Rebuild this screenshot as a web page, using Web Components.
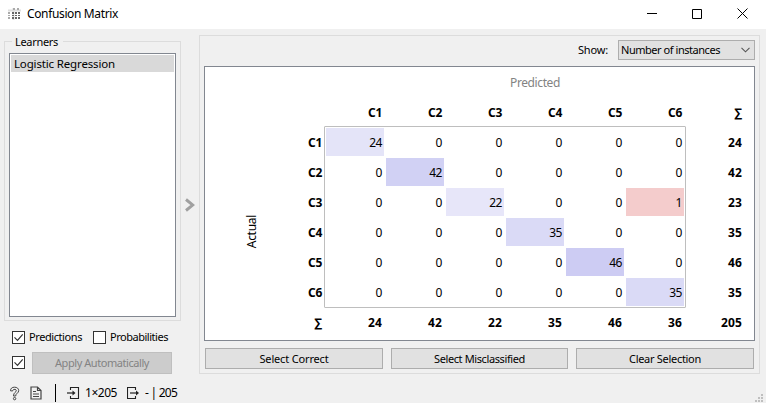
<!DOCTYPE html>
<html lang="en"><head><meta charset="utf-8"><title>Confusion Matrix</title>
<style>html,body{margin:0;width:766px;height:403px;overflow:hidden}</style></head>
<body><cm-window></cm-window>
<script>
const define=(name,html,init)=>{
  const t=document.createElement('template');t.innerHTML=html;
  customElements.define(name,class extends HTMLElement{
    connectedCallback(){
      if(this.shadowRoot)return;
      this.attachShadow({mode:'open'}).append(t.content.cloneNode(true));
      if(init)init(this,this.shadowRoot);
    }
  });
};

/* Text run whose tracking is adjusted to an advance width "w". */
define('ui-text',`<style>:host{display:inline-block;white-space:pre;line-height:16px}span{display:inline-block}</style><span><slot></slot></span>`,(h,r)=>{
  const w=+h.getAttribute('w');if(!w)return;
  const s=r.querySelector('span');
  const n=h.textContent.length;
  s.style.letterSpacing=((w-s.getBoundingClientRect().width)/n).toFixed(3)+'px';
});

define('ui-button',`<style>:host{display:flex;box-sizing:border-box;align-items:center;justify-content:center;background:#e1e1e1;border:1px solid #adadad;color:#000}
:host([disabled]){background:#ccc;border-color:#bfbfbf;color:#838383}</style><slot></slot>`);

define('ui-check',`<style>:host{display:flex;align-items:center;gap:4px;height:16px}svg{display:block;flex:none}path{display:none}:host([checked]) path{display:block}</style>
<svg width="13" height="13"><rect x=".5" y=".5" width="12" height="12" fill="#fff" stroke="#333"/><path d="M2.5 6.3l3 3 5.2-6" fill="none" stroke="#333" stroke-width="1.2"/></svg><slot></slot>`);

define('ui-combo',`<style>:host{display:flex;box-sizing:border-box;align-items:center;justify-content:space-between;width:137px;height:20px;padding:0 4px 0 2px;background:#e1e1e1;border:1px solid #adadad}svg{display:block}</style>
<slot></slot><svg width="9" height="6"><path d="M.5 .8l4 4 4-4" fill="none" stroke="#555" stroke-width="1.1"/></svg>`);

define('cm-titlebar',`<style>:host{display:flex;box-sizing:border-box;height:29px;background:#fff;align-items:center;padding:0 18px 2px 7px;font-size:12px}
.t{flex:1;margin-left:6px}.w{display:flex;gap:35px;align-items:center}svg{display:block}</style>
<svg width="14" height="12"><path d="M1 2.5h13M6.500 0v12" stroke="#ddd" stroke-width="2"/><g fill="#aaa"><rect x="1" y="4" width="2" height="2"/><rect x="1" y="7" width="2" height="1"/><rect x="1" y="9" width="2" height="2"/><rect x="6" y="0" width="2" height="2"/><rect x="10" y="0" width="2" height="2"/></g><g fill="#666"><rect x="5" y="4" width="2" height="2"/><rect x="8" y="4" width="2" height="2"/><rect x="11" y="4" width="2" height="2"/><rect x="5" y="7" width="2" height="1"/><rect x="8" y="7" width="2" height="1"/><rect x="11" y="7" width="2" height="1"/><rect x="5" y="9" width="2" height="2"/><rect x="8" y="9" width="2" height="2"/><rect x="11" y="9" width="2" height="2"/></g></svg>
<ui-text class="t" w="91">Confusion Matrix</ui-text>
<div class="w"><svg width="10" height="11"><path d="M0 5.500h10" stroke="#000"/></svg><svg width="10" height="10"><path d="M.5 .5h9v9h-9z" fill="none" stroke="#000"/></svg><svg width="11" height="11"><path d="M.5 .5l10 10M10.500 .5l-10 10" stroke="#000"/></svg></div>`);

define('cm-learners',`<style>:host{display:block;box-sizing:border-box;width:177px;height:286px;padding-top:6px}
.g{position:relative;height:280px;box-sizing:border-box;border:1px solid #dcdcdc;padding:11px 4px 3px}
.l{position:absolute;left:7px;top:-8px;padding:0 5px 0 3px;background:#f0f0f0}
.list{box-sizing:border-box;width:167px;height:264px;border:1px solid #828790;background:#fff;padding:1px}
.i{height:17px;background:#d9d9d9;padding-left:3px;font-size:11.500px;line-height:17px}</style>
<div class="g"><ui-text class="l" w="43">Learners</ui-text><div class="list"><div class="i"><ui-text w="101">Logistic Regression</ui-text></div></div></div>`);

define('cm-cell',`<style>:host{display:flex;box-sizing:border-box;margin:1px;align-items:center;justify-content:flex-end;padding:1px 2px 0 0;font-size:12px;background:var(--fill,transparent)}
:host([head]){font-weight:700}</style><slot></slot>`);

define('cm-matrix',`<style>:host{display:grid;box-sizing:border-box;width:551px;height:275px;border:1px solid #828790;background:#fff;grid-template-columns:60px repeat(8,60px);grid-template-rows:30px repeat(8,30px)}
.p{grid-area:1/3/2/10;place-self:center;color:#838383;font-size:12px;padding-top:2px}
.a{grid-area:3/1/10/2;place-self:center;writing-mode:vertical-rl;transform:rotate(180deg);font-size:12px;letter-spacing:-.3px;margin-left:34px;line-height:16px}
.f{grid-area:3/3/9/9;margin:-1px;border:1px solid #bebebe;border-radius:1px}</style>
<ui-text class="p" w="50">Predicted</ui-text><div class="a">Actual</div><div class="f"></div>`,(h,r)=>{
  const rows=[['','C1','C2','C3','C4','C5','C6','∑'],['C1',24,0,0,0,0,0,24],['C2',0,42,0,0,0,0,42],['C3',0,0,22,0,0,1,23],['C4',0,0,0,35,0,0,35],['C5',0,0,0,0,46,0,46],['C6',0,0,0,0,0,35,35],['∑',24,42,22,35,46,36,205]];
  const fills={24:'#e4e4f8',42:'#d1d1f4',22:'#e7e6f9',1:'#f4cccc',35:'#dadaf6',46:'#cdccf3'};
  rows.forEach((row,j)=>row.forEach((v,i)=>{
    if(v==='')return;
    const c=document.createElement('cm-cell'),head=!i||!j||i===7||j===7,s=String(v);
    c.style.gridArea=`${j+2}/${i+2}`;
    if(head)c.setAttribute('head','');else if(v)c.style.setProperty('--fill',fills[v]);
    const t=document.createElement('ui-text');t.textContent=s;
    if(s!=='∑')t.setAttribute('w',s[0]==='C'?14:s.length*(head?7:6.4));
    c.append(t);r.append(c);
  }));
});

define('cm-status',`<style>:host{display:flex;align-items:center;height:18px;padding-left:5px;font-size:12px}svg{display:block;flex:none}</style>
<svg width="12" height="15"><g fill="none" stroke="#444" stroke-linejoin="round"><path d="M1.500 4.800C1.500 2.400 3 1.200 5.500 1.200S9.700 2.500 9.700 4.600C9.700 7.300 6.700 7.100 6.700 10H4.500C4.500 6.300 7.300 6.300 7.300 4.700 7.300 2.800 3.800 2.800 3.600 5z"/><circle cx="5.600" cy="12.600" r="1.200"/></g></svg>
<svg width="12" height="14" style="margin-left:9px"><path d="M1 1h6.500L11 4.500V13H1zM7.500 1v3.500H11M3 5.500h3M3 8h6M3 10.500h6" fill="none" stroke="#444" stroke-width="1.200"/></svg>
<svg width="1" height="18" style="margin:0 11px 0 13px"><path d="M.5 0v18" stroke="#000"/></svg>
<svg width="13" height="14"><path d="M3.500 4V1.500h8v11h-8V10" fill="none" stroke="#222" stroke-width="1.100"/><path d="M0 7h7" stroke="#222" stroke-width="1.200"/><path d="M5.500 4.500L8.500 7l-3 2.500z" fill="#222"/></svg>
<ui-text w="32" style="margin-left:5px">1×205</ui-text>
<svg width="13" height="14" style="margin-left:10px"><path d="M8.500 4V1.500h-8v11h8V10" fill="none" stroke="#222" stroke-width="1.100"/><path d="M3 7h7" stroke="#222" stroke-width="1.200"/><path d="M9 4.500L12 7 9 9.500z" fill="#222"/></svg>
<ui-text w="32" style="margin-left:5px">- | 205</ui-text>`);

define('cm-window',`<style>
:host{display:grid;grid-template-rows:29px 374px;width:766px;height:403px;background:#f0f0f0;color:#000;font:11px "Noto Sans","Open Sans",sans-serif}
.body{display:grid;grid-template-columns:177px 18px 567px;grid-template-rows:345px 29px;padding-left:4px}
.left{padding-top:6px}
.checks{display:flex;gap:11px;margin:8px 0 0 8px}
.apply{display:flex;margin:7px 0 0 8px;gap:7px;align-items:center}.apply ui-button{width:140px;height:22px}
.apply ui-check{margin-top:-2px}
.mid{display:grid;place-items:center;padding:6px 0 0 0}
.right{box-sizing:border-box;width:561px;margin-top:6px;height:339px;border:1px solid #dcdcdc;padding:4px 0 0 4px}
.show{display:flex;justify-content:flex-end;align-items:center;gap:10px;padding-right:4px;height:20px}
.right cm-matrix{margin-top:6px}
.buttons{display:grid;grid-template-columns:178px 177px 178px;gap:8px;margin:7px 0 0 1px}.buttons ui-button{height:21px}
.foot{grid-column:1/4;display:flex;justify-content:space-between;padding:10px 3px 0 0;align-items:flex-start}
.grip{margin-top:10px;display:block}
</style>
<cm-titlebar></cm-titlebar>
<div class="body"><div class="left"><cm-learners></cm-learners>
<div class="checks"><ui-check checked><ui-text w="53">Predictions</ui-text></ui-check><ui-check><ui-text w="58">Probabilities</ui-text></ui-check></div>
<div class="apply"><ui-check checked></ui-check><ui-button disabled><ui-text w="94">Apply Automatically</ui-text></ui-button></div></div>
<div class="mid"><svg width="10" height="14"><path d="M1 1.500L7.800 7 1 12.500" fill="none" stroke="#a0a0a0" stroke-width="2.900"/></svg></div>
<div class="right"><div class="show"><ui-text w="30">Show:</ui-text><ui-combo><ui-text w="99">Number of instances</ui-text></ui-combo></div>
<cm-matrix></cm-matrix>
<div class="buttons"><ui-button><ui-text w="69">Select Correct</ui-text></ui-button><ui-button><ui-text w="91">Select Misclassified</ui-text></ui-button><ui-button><ui-text w="72">Clear Selection</ui-text></ui-button></div></div>
<div class="foot"><cm-status></cm-status><svg class="grip" width="8" height="8" fill="#bfbfbf"><path d="M6 0h2v2H6zM3 3h2v2H3zM6 3h2v2H6zM0 6h2v2H0zM3 6h2v2H3zM6 6h2v2H6z"/></svg></div></div>`);
</script></body></html>
